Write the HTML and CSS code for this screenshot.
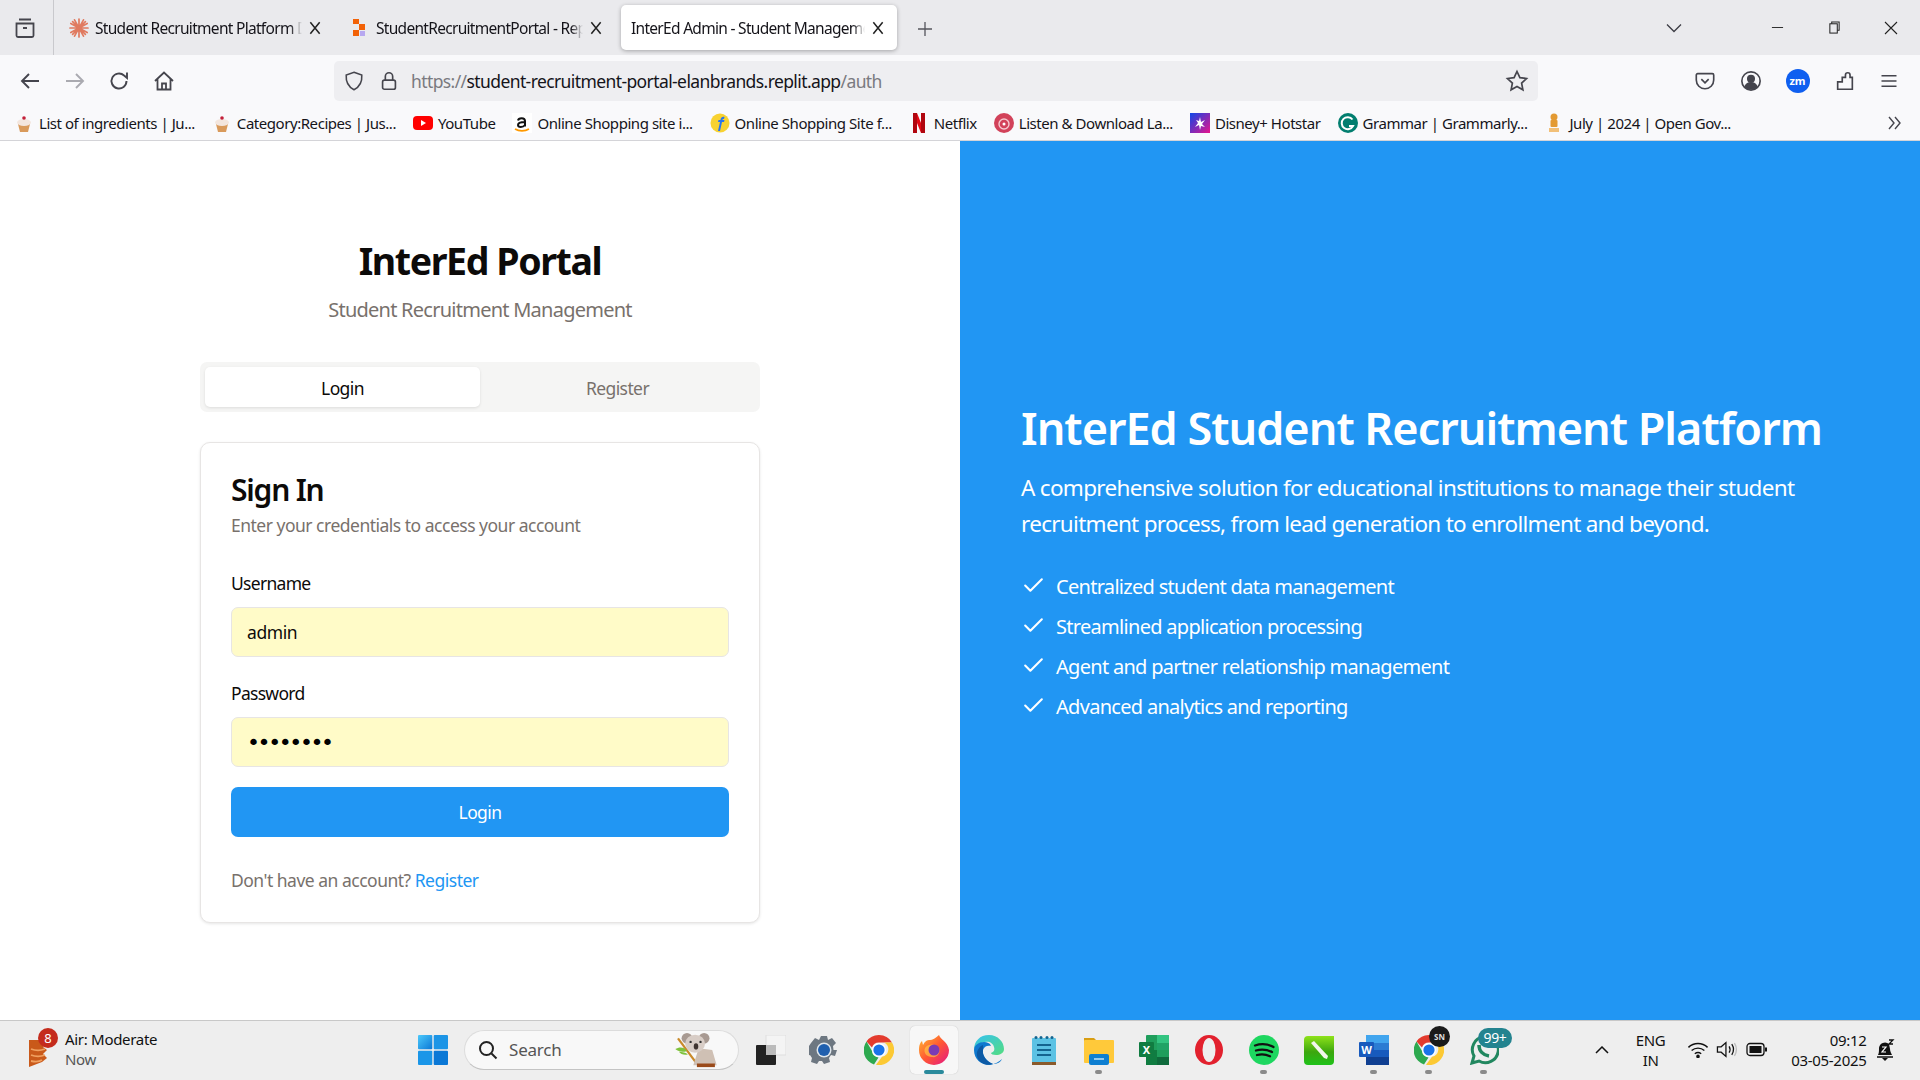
FILE: index.html
```html
<!DOCTYPE html>
<html lang="en">
<head>
<meta charset="utf-8">
<title>InterEd Admin - Student Management</title>
<link rel="stylesheet" href="styles.css">
</head>
<body>
<div class="screen">
  <header class="tabbar">
    <div class="tab-tools">
      <svg class="ico" viewBox="0 0 24 24" fill="none" stroke="#45454d" stroke-width="1.8"><path d="M6 3.500h12M3.500 7.500h17v12a1.500 1.500 0 0 1-1.500 1.500H5a1.500 1.500 0 0 1-1.500-1.500z"/><path d="M10 12h4" stroke-width="2"/></svg>
    </div>
    <div class="tab">
      <svg class="fav" viewBox="0 0 20 20" stroke="#e07a5f" stroke-width="1.7" stroke-linecap="round"><path d="M10 1v18M1 10h18M3.600 3.600l12.800 12.800M16.400 3.600L3.600 16.400M5.500 1.800l9 16.400M14.500 1.800l-9 16.400M1.800 5.500l16.400 9M18.200 5.500l-16.400 9"/></svg>
      <span class="tab-title">Student Recruitment Platform D</span>
      <svg class="tab-x" viewBox="0 0 12 12" stroke="#222" stroke-width="1.3"><path d="M2 1l8 10M10 1L2 11"/></svg>
    </div>
    <div class="tab tab-two">
      <svg class="fav" viewBox="0 0 20 20"><rect x="3" y="1" width="6" height="5" fill="#f26207"/><rect x="9" y="6" width="6" height="6" fill="#f26207"/><rect x="3" y="12" width="6" height="6" fill="#f26207"/><rect x="10" y="13" width="5" height="5" fill="#b7a8f0"/></svg>
      <span class="tab-title">StudentRecruitmentPortal - Repl</span>
      <svg class="tab-x" viewBox="0 0 12 12" stroke="#222" stroke-width="1.3"><path d="M2 1l8 10M10 1L2 11"/></svg>
    </div>
    <div class="tab tab-active">
      <span class="tab-title">InterEd Admin - Student Manageme</span>
      <svg class="tab-x" viewBox="0 0 12 12" stroke="#222" stroke-width="1.3"><path d="M2 1l8 10M10 1L2 11"/></svg>
    </div>
    <svg class="new-tab" viewBox="0 0 16 16" stroke="#55555c" stroke-width="1.3"><path d="M8 1v14M1 8h14"/></svg>
    <div class="win-controls">
      <svg class="chev" viewBox="0 0 16 10" fill="none" stroke="#3c3c44" stroke-width="1.3"><path d="M1 1.500l7 7 7-7"/></svg>
      <svg class="win" viewBox="0 0 14 14" stroke="#222" fill="none"><path d="M1 7h12"/></svg>
      <svg class="win win-restore" viewBox="0 0 14 14" stroke="#222" fill="none" stroke-width="1.1"><path d="M4 3V1h8v9h-2"/><rect x="2" y="3" width="8" height="10"/></svg>
      <svg class="win win-close" viewBox="0 0 14 14" stroke="#222" fill="none" stroke-width="1.1"><path d="M1 1l12 12M13 1L1 13"/></svg>
    </div>
  </header>

  <nav class="toolbar">
    <div class="nav-btns">
      <svg class="ico" viewBox="0 0 24 24" fill="none" stroke="#45454d" stroke-width="1.9"><path d="M21 12H4M11 5l-7 7 7 7"/></svg>
      <svg class="ico" viewBox="0 0 24 24" fill="none" stroke="#aaaab0" stroke-width="1.9"><path d="M3 12h17M13 5l7 7-7 7"/></svg>
      <svg class="ico" viewBox="0 0 24 24" fill="none" stroke="#45454d" stroke-width="1.9"><path d="M19.500 12a7.500 7.500 0 1 1-2.400-5.500L20 9V3.500"/></svg>
      <svg class="ico" viewBox="0 0 24 24" fill="none" stroke="#45454d" stroke-width="1.8"><path d="M3 12l9-8.500 9 8.500M5.500 10v10.500h13V10M10 20.500v-6h4v6"/></svg>
    </div>
    <div class="urlbar">
      <svg class="ico ico-url" viewBox="0 0 24 24" fill="none" stroke="#45454d" stroke-width="1.7"><path d="M12 2.500l8.500 3c.5 7-1.500 12.500-8.500 16-7-3.500-9-9-8.500-16z"/></svg>
      <svg class="ico ico-url" viewBox="0 0 24 24" fill="none" stroke="#45454d" stroke-width="1.8"><rect x="5" y="11" width="14" height="10" rx="2"/><path d="M8 11V7a4 4 0 0 1 8 0v4"/></svg>
      <span class="url"><span class="url-dim">https://</span>student-recruitment-portal-elanbrands.replit.app<span class="url-dim">/auth</span></span>
      <svg class="ico star" viewBox="0 0 24 24" fill="none" stroke="#45454d" stroke-width="1.7"><path d="M12 2.500l2.900 6.200 6.600.8-4.900 4.600 1.300 6.700-5.900-3.300-5.900 3.300 1.300-6.700L2.500 9.500l6.600-.8z"/></svg>
    </div>
    <div class="tool-right">
      <svg class="ico ico-tool" viewBox="0 0 24 24" fill="none" stroke="#45454d" stroke-width="1.8"><path d="M4 4h16a1.500 1.500 0 0 1 1.500 1.500V11a9.500 9.500 0 0 1-19 0V5.500A1.500 1.500 0 0 1 4 4z"/><path d="M8 10l4 4 4-4"/></svg>
      <svg class="ico ico-tool" viewBox="0 0 24 24" fill="none" stroke="#45454d" stroke-width="1.800"><circle cx="12" cy="12" r="10"/><circle cx="12" cy="9.500" r="3.500" fill="#45454d"/><path d="M5.500 18.500c1-3 3.500-4.500 6.500-4.500s5.500 1.500 6.500 4.500c-3.500 3-9.500 3-13 0z" fill="#45454d"/></svg>
      <span class="zm">zm</span>
      <svg class="ico ico-tool" viewBox="0 0 24 24" fill="none" stroke="#45454d" stroke-width="1.800"><path d="M4 13h5V8h3.500V5.500a2.500 2.500 0 0 1 5 0V8H20v13H4z"/></svg>
      <svg class="ico ico-menu" viewBox="0 0 24 24" fill="none" stroke="#45454d" stroke-width="2"><path d="M2 5h20M2 12h20M2 19h20"/></svg>
    </div>
  </nav>

  <div class="bookmarks">
    <a class="bm"><svg class="bm-ico" viewBox="0 0 20 20"><path d="M4 11h12l-2 8H6z" fill="#d99a5b"/><ellipse cx="10" cy="9.500" rx="7" ry="3.500" fill="#f3e6de"/><circle cx="10" cy="5" r="1.800" fill="#c3203a"/></svg>List of ingredients | Ju...</a>
    <a class="bm"><svg class="bm-ico" viewBox="0 0 20 20"><path d="M4 11h12l-2 8H6z" fill="#d99a5b"/><ellipse cx="10" cy="9.500" rx="7" ry="3.500" fill="#f3e6de"/><circle cx="10" cy="5" r="1.800" fill="#c3203a"/></svg>Category:Recipes | Jus...</a>
    <a class="bm"><svg class="bm-ico" viewBox="0 0 20 20"><rect y="3" width="20" height="14" rx="4" fill="#f00"/><path d="M8 7l5 3-5 3z" fill="#fff"/></svg>YouTube</a>
    <a class="bm"><svg class="bm-ico" viewBox="0 0 20 20"><rect width="20" height="20" fill="#fff"/><path d="M6 7.500c.5-3 7-3.500 7 .5v5.500M13 9c-5 0-7 1-7 3 0 2.500 5 2.500 7 0" fill="none" stroke="#111" stroke-width="2"/><path d="M3 16c4 2.500 10 2.500 14 0" fill="none" stroke="#f90" stroke-width="1.600"/></svg>Online Shopping site i...</a>
    <a class="bm"><svg class="bm-ico" viewBox="0 0 20 20"><circle cx="10" cy="10" r="9.500" fill="#f8d231"/><path d="M8 18l2-9h-2l.5-2h2c.5-3 2-3.500 4-3l-.5 2c-1-.2-1.500 0-1.500 1h2l-.5 2h-2l-2 9z" fill="#2874f0"/></svg>Online Shopping Site f...</a>
    <a class="bm"><svg class="bm-ico" viewBox="0 0 20 20"><path d="M4 0h4l8 20h-4z" fill="#e50914"/><path d="M4 0h4v20H4zM12 0h4v20h-4z" fill="#b1060f"/></svg>Netflix</a>
    <a class="bm"><svg class="bm-ico" viewBox="0 0 20 20"><circle cx="10" cy="10" r="10" fill="#d2425a"/><circle cx="10" cy="11" r="5" fill="none" stroke="#f7c7cf" stroke-width="1.400"/><circle cx="10" cy="11" r="1.500" fill="#fff"/></svg>Listen &amp; Download La...</a>
    <a class="bm"><svg class="bm-ico" viewBox="0 0 20 20"><defs><linearGradient id="dh" x1="0" y1="0" x2="1" y2="1"><stop offset="0" stop-color="#0d47e8"/><stop offset="1" stop-color="#e8138c"/></linearGradient></defs><rect width="20" height="20" fill="url(#dh)"/><path d="M10 4l1 5 4-2-3 4 3 3-4-1-1 4-1-5-4 2 3-4-2-3 3 1z" fill="#fff"/></svg>Disney+ Hotstar</a>
    <a class="bm"><svg class="bm-ico" viewBox="0 0 20 20"><circle cx="10" cy="10" r="10" fill="#027e6f"/><path d="M14.500 6.500a6 6 0 1 0 .5 6.500h-4" fill="none" stroke="#fff" stroke-width="2"/></svg>Grammar | Grammarly...</a>
    <a class="bm"><svg class="bm-ico" viewBox="0 0 20 20" fill="#e39a32"><circle cx="10" cy="4" r="3.500"/><rect x="6.500" y="7" width="7" height="7" rx="1"/><rect x="5" y="15" width="10" height="4" fill="#f2c078"/></svg>July | 2024 | Open Gov...</a>
    <svg class="bm-more" viewBox="0 0 16 14" fill="none" stroke="#45454d" stroke-width="1.400"><path d="M2 1l5 6-5 6M8 1l5 6-5 6"/></svg>
  </div>

  <main class="page">
    <section class="auth-side">
      <div class="auth-col">
        <h1 class="brand">InterEd Portal</h1>
        <p class="brand-sub">Student Recruitment Management</p>
        <div class="seg">
          <button class="seg-btn seg-on" type="button">Login</button>
          <button class="seg-btn" type="button">Register</button>
        </div>
        <div class="card">
          <h2 class="card-title">Sign In</h2>
          <p class="card-desc">Enter your credentials to access your account</p>
          <form class="form">
            <label class="label" for="u">Username</label>
            <input class="input" id="u" type="text" value="admin" readonly>
            <label class="label label-next" for="p">Password</label>
            <input class="input input-pw" id="p" type="password" value="password" readonly>
            <button class="submit" type="button">Login</button>
          </form>
          <p class="foot">Don't have an account? <a class="link">Register</a></p>
        </div>
      </div>
    </section>
    <section class="hero">
      <h2 class="hero-title">InterEd Student Recruitment Platform</h2>
      <p class="hero-text">A comprehensive solution for educational institutions to manage their student recruitment process, from lead generation to enrollment and beyond.</p>
      <ul class="hero-list">
        <li class="hero-item"><svg class="check" viewBox="0 0 24 24" fill="none" stroke="#fff" stroke-width="2" stroke-linecap="round" stroke-linejoin="round"><path d="M20 6L9 17l-5-5"/></svg>Centralized student data management</li>
        <li class="hero-item"><svg class="check" viewBox="0 0 24 24" fill="none" stroke="#fff" stroke-width="2" stroke-linecap="round" stroke-linejoin="round"><path d="M20 6L9 17l-5-5"/></svg>Streamlined application processing</li>
        <li class="hero-item"><svg class="check" viewBox="0 0 24 24" fill="none" stroke="#fff" stroke-width="2" stroke-linecap="round" stroke-linejoin="round"><path d="M20 6L9 17l-5-5"/></svg>Agent and partner relationship management</li>
        <li class="hero-item"><svg class="check" viewBox="0 0 24 24" fill="none" stroke="#fff" stroke-width="2" stroke-linecap="round" stroke-linejoin="round"><path d="M20 6L9 17l-5-5"/></svg>Advanced analytics and reporting</li>
      </ul>
    </section>
  </main>

  <footer class="taskbar">
    <div class="weather">
      <span class="weather-ico">
        <svg class="weather-svg" viewBox="0 0 28 32"><path d="M3 4h12l4 3-2 4 4 3-4 4 4 4-5 4-13 5z" fill="#c9591a"/><path d="M5 13c5 2 9 2 14 0M5 19c5 2 9 2 14 0M5 25c5 1 8 1 11-1" fill="none" stroke="#f0a060" stroke-width="1.800"/></svg>
        <span class="weather-badge">8</span>
      </span>
      <span class="weather-text"><span class="weather-main">Air: Moderate</span><span class="weather-sub">Now</span></span>
    </div>
    <svg class="start" viewBox="0 0 30 30"><defs><linearGradient id="wa" x1="0" y1="0" x2="1" y2="1"><stop offset="0" stop-color="#4cc9fb"/><stop offset="1" stop-color="#0a78d6"/></linearGradient></defs><rect width="14.300" height="14.300" rx="1" fill="url(#wa)"/><rect x="15.700" width="14.300" height="14.300" rx="1" fill="#1c95e6"/><rect y="15.700" width="14.300" height="14.300" rx="1" fill="#1a96e8"/><rect x="15.700" y="15.700" width="14.300" height="14.300" rx="1" fill="#0a78d6"/></svg>
    <div class="search">
      <svg class="search-ico" viewBox="0 0 20 20" fill="none" stroke="#222" stroke-width="2"><circle cx="8.500" cy="8.500" r="6.500"/><path d="M13.500 13.500l5 5"/></svg>
      <span class="search-text">Search</span>
      <svg class="koala" viewBox="0 0 46 40"><path d="M3 7l20 27" stroke="#c98a2a" stroke-width="2.500"/><path d="M0 19c5-3 10-2 13 2-5 2-9 1-13-2zM4 22c4 0 8 1 10 3-4 1-8 0-10-3z" fill="#7fc23c"/><path d="M20 37l26 0-5-17-15-2z" fill="#cfc0b4"/><path d="M24 35h20v4H24z" fill="#9a4a1a"/><circle cx="13" cy="7" r="6" fill="#a89a92"/><circle cx="32" cy="7" r="6" fill="#a89a92"/><ellipse cx="22" cy="13" rx="11" ry="10" fill="#d8cdc6"/><ellipse cx="23" cy="16" rx="2.500" ry="3.500" fill="#3f3430"/><circle cx="17" cy="11" r="1.300" fill="#333"/><circle cx="28" cy="11" r="1.300" fill="#333"/></svg>
    </div>
    <svg class="taskview" viewBox="0 0 30 30"><rect x="10" width="20" height="20" fill="#f4f4f4" stroke="#dedede"/><rect y="10" width="20" height="20" rx="1" fill="#222"/><rect x="10" y="10" width="10" height="10" fill="#bbb"/></svg>
    <div class="apps">
      <span class="app"><svg class="app-ico" viewBox="0 0 30 30"><path d="M12 1h6l1 4 4-2 4 5-3 3 .5 4 3.500 0-2 6-4-1-2 3 1 4-6 2-2-3h-3l-2 3-6-2 1-4-2-3-4 1-1-6 4-.5V11L2 8l4-5 4 2z" fill="#6d7781"/><circle cx="15" cy="15" r="7.500" fill="#dfe6ec"/><circle cx="15" cy="15" r="6" fill="#1f5fae"/></svg></span>
      <span class="app"><svg class="app-ico" viewBox="0 0 30 30"><path d="M15 0a15 15 0 0 1 13 7.500H15a7.500 7.500 0 0 0-7 5L2.500 6.500A15 15 0 0 1 15 0z" fill="#e33b2e"/><path d="M2.500 6.500L8 16a7.500 7.500 0 0 0 6.500 6.500L10 29.500A15 15 0 0 1 2.500 6.500z" fill="#2da94f"/><path d="M28 7.500A15 15 0 0 1 12 29.700l6-8a7.500 7.500 0 0 0 2-14.200z" fill="#fcc934"/><circle cx="15" cy="15" r="7" fill="#fff"/><circle cx="15" cy="15" r="5.600" fill="#1a73e8"/></svg></span>
      <span class="app app-on"><svg class="app-ico" viewBox="0 0 30 30"><defs><linearGradient id="ff" x1="0" y1="0" x2="1" y2="1"><stop offset="0" stop-color="#ffbd2e"/><stop offset=".5" stop-color="#ff5634"/><stop offset="1" stop-color="#e31587"/></linearGradient></defs><path d="M20 0c1 4 9 7 10 15A15 15 0 0 1 0 15c0-5 1-7 3-9l1 4c2-4 4-5 7-5 2 0 6-2 9-5z" fill="url(#ff)"/><path d="M6 13c4-5 11-4 14 0 2 5-2 10-7 9-5 0-9-4-7-9z" fill="#ffd24a" opacity=".6"/><circle cx="15" cy="15" r="5.500" fill="#7a3bb5"/></svg><i class="app-bar"></i></span>
      <span class="app"><svg class="app-ico" viewBox="0 0 30 30"><defs><linearGradient id="eg" x1="0" y1="0" x2="1" y2="1"><stop offset="0" stop-color="#35c1f1"/><stop offset="1" stop-color="#54dd7f"/></linearGradient></defs><path d="M15 0c9 0 15 7 15 14 0 4-4 6-8 6-3 0-5-1-5-2 3-1 4-3 3-6-1-4-5-6-9-5C5 8 0 12 0 15 0 6 6 0 15 0z" fill="url(#eg)"/><path d="M0 15c0-5 5-8 10-8 3 0 6 1 7 4-3-1-7 0-8 4-1 5 3 11 10 14 4 0 8-2 9-5-3 3-7 5-12 6C7 30 0 24 0 15z" fill="#0f79cf"/><path d="M9 15c-1 6 4 12 10 14-3 1-7 1-9 0-5-2-8-7-7-12 1-3 3-6 6-7z" fill="#0c59a4"/></svg></span>
      <span class="app"><svg class="app-ico" viewBox="0 0 30 30"><rect x="3" y="3" width="24" height="25" rx="1" fill="#5cc2e4"/><rect x="3" y="27" width="24" height="3" fill="#8a5a2b"/><path d="M8 10h14M8 15h14M8 20h14" stroke="#14648f" stroke-width="1.800"/><circle cx="7" cy="2.500" r="1.500" fill="#14648f"/><circle cx="12" cy="2.500" r="1.500" fill="#14648f"/><circle cx="18" cy="2.500" r="1.500" fill="#14648f"/><circle cx="23" cy="2.500" r="1.500" fill="#14648f"/></svg></span>
      <span class="app"><svg class="app-ico" viewBox="0 0 30 30"><path d="M0 3h10l3 3h-13z" fill="#d99e12"/><rect y="5" width="30" height="23" rx="1" fill="#ffc93a"/><rect x="5" y="19" width="20" height="11" rx="2" fill="#0f7fd1"/><path d="M10 24h10" stroke="#bfe3fb" stroke-width="1.500"/></svg><i class="app-dot"></i></span>
      <span class="app"><svg class="app-ico" viewBox="0 0 30 30"><rect x="7" width="23" height="30" rx="1" fill="#1f9e5c"/><rect x="18" width="12" height="8" fill="#33c481"/><rect x="18" y="8" width="12" height="7" fill="#21a366"/><rect x="18" y="22" width="12" height="8" fill="#0f6a3c"/><rect x="7" y="15" width="11" height="15" fill="#107c41"/><rect y="7" width="15" height="15" rx="1" fill="#107c41"/><text class="app-letter" x="7.500" y="19" text-anchor="middle">X</text></svg></span>
      <span class="app"><svg class="app-ico" viewBox="0 0 30 30"><ellipse cx="15" cy="15" rx="14" ry="15" fill="#e2212e"/><ellipse cx="15" cy="15" rx="6.500" ry="12" fill="#eeeeee"/></svg></span>
      <span class="app"><svg class="app-ico" viewBox="0 0 30 30"><circle cx="15" cy="15" r="15" fill="#1ed760"/><path d="M6 10.500c6-2 13-1.500 18.500 1.500M7 15.500c5-1.500 11-1 16 1.500M8 20c4-1 9-.7 13 1.200" fill="none" stroke="#111" stroke-width="2.300" stroke-linecap="round"/></svg><i class="app-dot"></i></span>
      <span class="app"><svg class="app-ico" viewBox="0 0 30 30"><defs><linearGradient id="nt" x1="0" y1="0" x2="0" y2="1"><stop offset="0" stop-color="#8ee21a"/><stop offset=".55" stop-color="#3ca60e"/><stop offset="1" stop-color="#1fc21a"/></linearGradient></defs><path d="M4 1h26v25a4 4 0 0 1-4 4H4a4 4 0 0 1-4-4V5a4 4 0 0 1 4-4z" fill="url(#nt)"/><path d="M7 8l3-2 14 15-1 3-3-1z" fill="#f2f6ec"/></svg></span>
      <span class="app"><svg class="app-ico" viewBox="0 0 30 30"><rect x="7" width="23" height="30" rx="1" fill="#2b7cd3"/><rect x="7" width="23" height="8" fill="#41a5ee"/><rect x="7" y="15" width="23" height="8" fill="#185abd"/><rect x="7" y="22" width="23" height="8" fill="#103f91"/><rect y="7" width="15" height="15" rx="1" fill="#185abd"/><text class="app-letter" x="7.500" y="19" text-anchor="middle">W</text></svg><i class="app-dot"></i></span>
      <span class="app"><svg class="app-ico" viewBox="0 0 30 30"><path d="M15 0a15 15 0 0 1 13 7.500H15a7.500 7.500 0 0 0-7 5L2.500 6.500A15 15 0 0 1 15 0z" fill="#e33b2e"/><path d="M2.500 6.500L8 16a7.500 7.500 0 0 0 6.500 6.500L10 29.500A15 15 0 0 1 2.500 6.500z" fill="#2da94f"/><path d="M28 7.500A15 15 0 0 1 12 29.700l6-8a7.500 7.500 0 0 0 2-14.200z" fill="#fcc934"/><circle cx="15" cy="15" r="7" fill="#fff"/><circle cx="15" cy="15" r="5.600" fill="#1a73e8"/></svg><span class="sn">SN</span><i class="app-dot"></i></span>
      <span class="app"><svg class="app-ico" viewBox="0 0 30 30" fill="none" stroke="#21875f" stroke-width="3"><path d="M3 28l2-7a13 13 0 1 1 5 5z"/><path d="M10 10c0 6 4 10 10 11" stroke-width="3.500"/></svg><span class="wa-badge">99+</span><i class="app-dot"></i></span>
    </div>
    <div class="tray">
      <svg class="tray-up" viewBox="0 0 14 8" fill="none" stroke="#111" stroke-width="1.500"><path d="M1 7l6-6 6 6"/></svg>
      <span class="lang"><span>ENG</span><span>IN</span></span>
      <svg class="tray-ico tray-wifi" viewBox="0 0 20 16" fill="none" stroke="#111" stroke-width="1.400"><path d="M1 6a13 13 0 0 1 18 0M4 9a9 9 0 0 1 12 0M7 12a5 5 0 0 1 6 0"/><circle cx="10" cy="14.500" r="1" fill="#111"/></svg>
      <svg class="tray-ico tray-vol" viewBox="0 0 20 16" fill="none" stroke="#111" stroke-width="1.200"><path d="M1 5.500h3.500L9 1.500v13l-4.500-4H1zM12 5c1.200 2 1.200 4 0 6M14.500 3c2 3 2 7 0 10"/><path d="M17 2c2.500 4 2.500 8 0 12" stroke="#bbb"/></svg>
      <svg class="tray-ico" viewBox="0 0 22 14" fill="none" stroke="#111" stroke-width="1.300"><rect x="1" y="1" width="17" height="12" rx="3"/><rect x="3.500" y="3.500" width="12" height="7" fill="#111" stroke="none"/><path d="M20 5v4" stroke-width="2"/></svg>
      <span class="clock"><span>09:12</span><span>03-05-2025</span></span>
      <svg class="bell" viewBox="0 0 20 24"><path d="M3 17c1-2 1-4 1-7a6 6 0 0 1 10-4l1 5c0 2 1 4 2 6z" fill="#111"/><path d="M7 20h6l-3 3z" fill="#111"/><path d="M2 19h16" stroke="#111" stroke-width="1.500"/><path d="M7 9h4l-4 5h4" fill="none" stroke="#fff" stroke-width="1.200"/><path d="M14 2h4l-4 4h4" fill="none" stroke="#111" stroke-width="1.300"/></svg>
    </div>
  </footer>
</div>
</body>
</html>
```
FILE: styles.css
```css
* { box-sizing: border-box; }
html, body { margin: 0; padding: 0; height: 100%; }
body { font-family: "Noto Sans", "Open Sans", sans-serif; color: #0c0a09; background: #fff; overflow: hidden; }
.screen { width: 1920px; height: 1080px; display: flex; flex-direction: column; }
h1, h2, p, ul { margin: 0; padding: 0; }

/* tab strip */
.tabbar { height: 55px; flex: none; background: #eaeaed; display: flex; align-items: flex-start; position: relative; }
.tab-tools { width: 54px; height: 55px; flex: none; border-right: 1px solid #c9c9cd; display: flex; align-items: center; justify-content: center; padding-right: 4px; }
.ico { width: 24px; height: 24px; flex: none; display: block; }
.tab { width: 276px; height: 45px; margin-top: 5px; padding: 0 8px 0 15px; flex: none; display: flex; align-items: center; gap: 6px; border-radius: 5px; font-size: 15.500px; letter-spacing: -.7px; white-space: nowrap; color: #15141a; }
.tab-two { margin-left: 5px; }
.tab-active { background: #fff; margin-left: 10px; padding: 0 12px 0 10px; box-shadow: 0 1px 4px rgba(0,0,0,.3); }
.fav { width: 20px; height: 20px; flex: none; }
.tab-title { flex: 1; min-width: 0; -webkit-mask-image: linear-gradient(to left, transparent 0, #000 12px); mask-image: linear-gradient(to left, transparent 0, #000 12px); }
.tab-x { width: 14px; height: 14px; flex: none; }
.new-tab { width: 16px; height: 16px; margin: 21px 0 0 20px; flex: none; }
.win-controls { margin-left: auto; height: 55px; display: flex; align-items: center; }
.chev { width: 16px; height: 10px; margin-right: 89px; }
.win { width: 13px; height: 13px; margin-right: 44px; }
.win-restore { margin-right: 43px; }
.win-close { margin-right: 22px; width: 14px; height: 14px; }

/* toolbar */
.toolbar { height: 50px; flex: none; background: #f9f9fb; display: flex; align-items: center; padding-top: 1px; }
.nav-btns { width: 334px; flex: none; display: flex; gap: 20.500px; padding-left: 18px; }
.urlbar { width: 1204px; height: 40px; flex: none; background: #eeeef1; border-radius: 5px; display: flex; align-items: center; padding: 0 9px 0 9px; }
.ico-url { width: 22px; height: 22px; margin-right: 13px; }
.url { font-size: 17.500px; line-height: 24px; letter-spacing: -.6px; color: #15141a; white-space: nowrap; margin-left: -2px; padding-top: 1px; }
.url-dim { color: #7a7a80; }
.star { margin-left: auto; }
.tool-right { display: flex; align-items: center; gap: 24px; margin-left: 155.500px; }
.ico-tool { width: 22px; height: 22px; }
.ico-menu { width: 18px; height: 18px; }
.zm { width: 24px; height: 24px; border-radius: 50%; background: #0f5ff0; color: #fff; font-size: 11px; font-weight: 700; display: flex; align-items: center; justify-content: center; }

/* bookmarks */
.bookmarks { height: 36px; flex: none; background: #f9f9fb; display: flex; align-items: center; gap: 17px; padding: 0 14px; font-size: 15px; letter-spacing: -.45px; color: #15141a; white-space: nowrap; border-bottom: 1px solid #d4d4d8; }
.bm { display: flex; align-items: center; gap: 5px; }
.bm-ico { width: 20px; height: 20px; flex: none; }
.bm-more { width: 16px; height: 14px; margin-left: auto; margin-right: 3px; }

/* page */
.page { flex: 1; min-height: 0; display: flex; }
.auth-side { width: 960px; flex: none; display: flex; align-items: center; justify-content: center; background: #fff; }
.auth-col { width: 560px; display: flex; flex-direction: column; }
.brand { font-size: 37.500px; line-height: 45px; font-weight: 700; text-align: center; letter-spacing: -1.4px; }
.brand-sub { font-size: 20px; line-height: 30px; margin-top: 11.500px; text-align: center; color: #78716c; letter-spacing: -.75px; }
.seg { height: 50px; margin-top: 37.500px; padding: 5px; background: #f5f5f4; border-radius: 7px; display: flex; }
.seg-btn { flex: 1; border: 0; background: transparent; font: inherit; font-size: 17.500px; letter-spacing: -.6px; color: #78716c; border-radius: 5px; padding: 2px 0 0; }
.seg-on { background: #fff; color: #0c0a09; box-shadow: 0 1px 3px rgba(0,0,0,.1); }
.card { margin-top: 30px; border: 1px solid #e7e5e4; border-radius: 10px; padding: 28px 30px 29px; box-shadow: 0 1px 3px rgba(0,0,0,.1); background: #fff; }
.card-title { font-size: 30px; line-height: 37.500px; font-weight: 600; letter-spacing: -1.2px; }
.card-desc { font-size: 17.500px; line-height: 25px; margin-top: 4px; color: #78716c; letter-spacing: -.5px; }
.form { display: flex; flex-direction: column; margin-top: 34px; }
.label { font-size: 17.500px; line-height: 22px; margin-bottom: 13px; letter-spacing: -.7px; }
.label-next { margin-top: 25px; margin-bottom: 13px; }
.input { height: 50px; width: 100%; padding: 0 15px; border: 1px solid #e7e5e4; border-radius: 7px; background: #fffbc8; font-family: inherit; font-size: 17.500px; letter-spacing: -.4px; color: #0c0a09; outline: 0; }
.input-pw { font-family: "DejaVu Sans", sans-serif; font-size: 22px; letter-spacing: -2.400px; color: #000; padding-top: 1px; }
.submit { height: 50px; margin-top: 20px; border: 0; border-radius: 7px; background: #2196f3; color: #fff; font: inherit; font-size: 17.500px; letter-spacing: -.6px; }
.foot { font-size: 17.500px; line-height: 25px; margin-top: 31px; color: #78716c; letter-spacing: -.5px; }
.link { color: #2196f3; }

.hero { flex: 1; background: #2196f3; color: #fff; display: flex; flex-direction: column; justify-content: center; padding: 0 61px 42px; }
.hero-title { font-size: 45px; line-height: 56px; font-weight: 600; letter-spacing: -1px; white-space: nowrap; }
.hero-text { font-size: 22.500px; line-height: 35.500px; margin-top: 14.300px; letter-spacing: -.7px; width: 820px; }
.hero-list { list-style: none; margin-top: 33px; display: flex; flex-direction: column; gap: 15px; }
.hero-item { font-size: 20px; line-height: 25px; display: flex; align-items: center; gap: 10px; letter-spacing: -.7px; }
.check { width: 25px; height: 25px; flex: none; margin-top: -3px; }

/* taskbar */
.taskbar { height: 60px; flex: none; background: #eeeeee; border-top: 1px solid #c8c8c8; padding-bottom: 2px; display: flex; align-items: center; position: relative; }
.weather { width: 418px; flex: none; padding-left: 26px; display: flex; align-items: center; gap: 9px; }
.weather-ico { width: 30px; height: 38px; position: relative; flex: none; }
.weather-svg { width: 28px; height: 34px; display: block; margin-top: 4px; }
.weather-badge { position: absolute; top: -3px; left: 12px; width: 20px; height: 20px; border-radius: 50%; background: #c42b1c; color: #fff; font-size: 13px; display: flex; align-items: center; justify-content: center; }
.weather-text { display: flex; flex-direction: column; font-size: 15px; line-height: 20px; letter-spacing: -.3px; margin-top: -1px; }
.weather-main { color: #111; }
.weather-sub { color: #555; }
.start { width: 30px; height: 30px; flex: none; }
.search { width: 275px; height: 40px; margin-left: 16px; flex: none; background: #f8f8f8; border: 1px solid #dcdcdc; border-bottom-color: #c4c4c4; border-radius: 20px; display: flex; align-items: center; padding: 0 19px 0 13px; font-size: 17px; color: #555; letter-spacing: -.2px; }
.search-ico { width: 20px; height: 20px; flex: none; }
.search-text { margin-left: 11px; }
.koala { width: 46px; height: 36px; margin-left: auto; flex: none; }
.taskview { width: 30px; height: 30px; flex: none; margin-left: 17px; }
.apps { display: flex; margin-left: 10px; }
.app { width: 55px; height: 48px; display: flex; align-items: center; justify-content: center; position: relative; }
.app-on { width: 48px; margin: 0 3.500px; background: #f7f7f7; border-radius: 5px; box-shadow: 0 0 1px rgba(0,0,0,.25); }
.app-ico { width: 30px; height: 30px; display: block; }
.app-bar { position: absolute; bottom: 0; left: 14px; width: 20px; height: 4px; border-radius: 2px; background: #2a8a9c; }
.app-dot { position: absolute; bottom: 0; left: 24px; width: 7px; height: 4px; border-radius: 2px; background: #8a8a8a; }
.app-letter { font-size: 11px; font-weight: 700; fill: #fff; font-family: "Noto Sans", sans-serif; }
.sn { position: absolute; top: 0; left: 28px; width: 21px; height: 21px; border-radius: 50%; background: #1a1a1a; color: #ddd; font-size: 8px; font-weight: 700; display: flex; align-items: center; justify-content: center; }
.wa-badge { position: absolute; top: 2px; left: 22px; width: 34px; height: 20px; border-radius: 10px; background: #23838f; color: #fff; font-size: 14px; letter-spacing: -.3px; display: flex; align-items: center; justify-content: center; }
.tray { margin-left: auto; display: flex; align-items: center; }
.tray-up { width: 14px; height: 8px; margin-right: 23px; }
.lang { display: flex; flex-direction: column; align-items: center; font-size: 15px; line-height: 20px; letter-spacing: -.3px; width: 38px; color: #111; margin-right: 17px; }
.tray-ico { width: 22px; height: 17px; margin-right: 6px; }
.tray-wifi { margin-right: 7.200px; }
.tray-vol { margin-right: 8.400px; }
.clock { display: flex; flex-direction: column; align-items: flex-end; font-size: 15px; line-height: 20px; letter-spacing: -.3px; color: #111; margin: 0 8px 0 17px; }
.bell { width: 20px; height: 24px; margin-right: 25.500px; }
```
